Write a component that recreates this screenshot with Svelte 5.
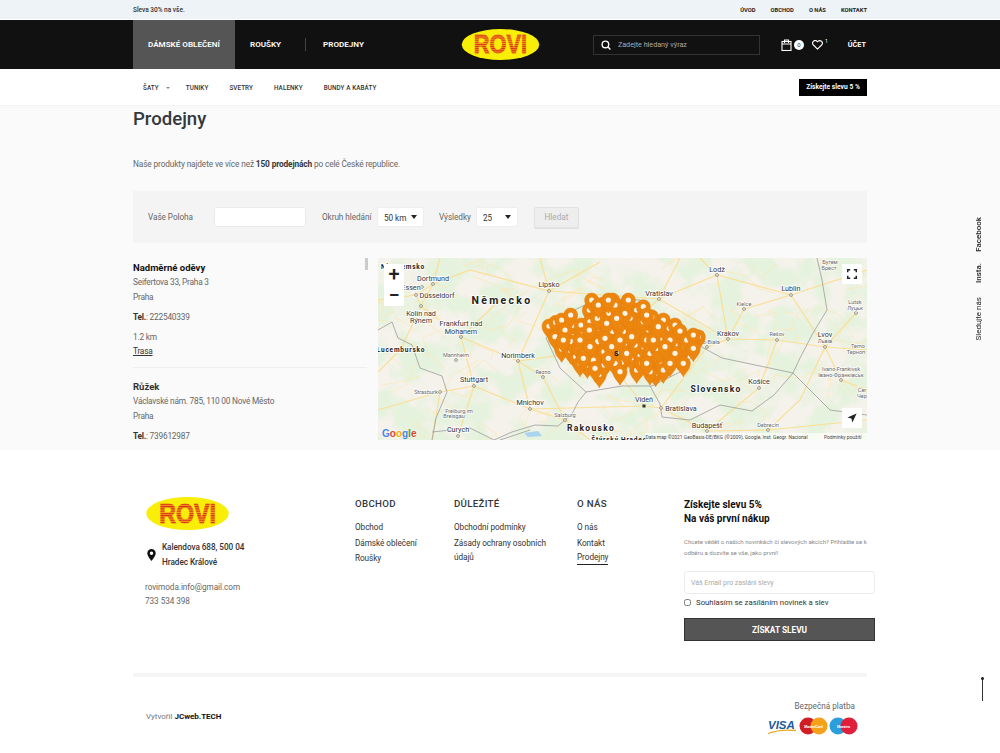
<script>
  const topLinks = ["ÚVOD", "OBCHOD", "O NÁS", "KONTAKT"];
  const subLinks = ["TUNIKY", "SVETRY", "HALENKY", "BUNDY A KABÁTY"];

  // pin heads, traced on the map (svg units are 3x, offset below)
  const rawPins = [
    [27,123],[47,112],[65,105],[92,90],[45,155],[100,150],[65,192],[97,155],[92,197],[107,215],
    [123,120],[148,75],[155,45],[190,58],[218,45],[240,88],[207,85],[255,60],[290,75],[310,65],
    [172,130],[215,140],[270,130],[305,145],[345,145],[370,105],[388,130],[405,120],[420,138],[475,155],
    [450,168],[360,165],[405,180],[435,185],[415,215],[380,208],[290,255],[347,265],[330,260],[245,232],
    [178,268],[142,240],[120,235],[192,240],[275,218],[300,210],[255,175],[205,165],[172,170],[143,165],
    [95,170],[115,185],[132,205],[155,205],[192,200],[230,200],[250,140],[290,145],[325,135],[285,105],
    [270,100],[150,110],[180,100],[310,185],[330,205],[355,225],[365,240],[305,235],[260,205],[225,235],
    [160,225],[340,120],[235,120],[320,165],[285,180],[350,190],[390,165],[440,165],[460,150],[405,205],
    [370,255],[200,115],[125,150],[255,85],[195,160],[148,135],[172,100],[300,115],[225,60],[310,110],
    [75,135],[70,165],[120,165],[150,185],[215,185],[240,165],[275,155],[340,165],[375,185],[230,100],
    [265,45],[175,60],[130,220],[205,220],[240,260],[165,250],[320,235],[390,235],[430,235],[460,190],
    [335,95],[355,125],[320,90],[205,45]
  ];
  const pins = rawPins.map(([x, y]) => [540 + x / 3, 285 + y / 3]);

  const labels = [
    ["Dortmund", 433, 281], ["Essen", 411, 290], ["Düsseldorf", 437, 298], ["Lipsko", 549, 287],
    ["Kolín nad", 421, 316], ["Rýnem", 421, 323], ["Frankfurt nad", 461, 326], ["Mohanem", 461, 334],
    ["Norimberk", 518, 358], ["Stuttgart", 474, 382], ["Mnichov", 530, 405], ["Curych", 458, 432],
    ["Lodž", 717, 272], ["Lublin", 791, 291], ["Vratislav", 659, 296], ["Krakov", 728, 336],
    ["Lvov", 825, 337], ["Košice", 759, 384], ["Vídeň", 644, 402], ["Bratislava", 681, 411],
    ["Budapešť", 707, 428], ["Katovice", 690, 335]
  ];
  const smallLabels = [
    ["Mannheim", 456, 357], ["Řezno", 543, 374], ["Štrasburk", 426, 394], ["Freiburg im", 459, 413],
    ["Breisgau", 454, 418], ["Salzburg", 565, 417], ["Kielce", 744, 306], ["Rešov", 777, 336],
    ["Львів", 825, 343], ["Бугем", 830, 264], ["Брест", 829, 270], ["Lutsk", 855, 304], ["Луцьк", 855, 310],
    ["Terno", 858, 348], ["Терноп", 856, 354], ["Ivano-Frankivsk", 841, 371], ["Івано-Франківськ", 841, 377],
    ["Bielsko-Biała", 704, 344], ["Debrecín", 768, 427], ["Čer", 862, 392], ["Чер", 862, 398]
  ];
  const boldLabels = [
    ["Nizozemsko", 403, 269, ""], ["Německo", 502, 304, "big"], ["Lucembursko", 401, 352, ""],
    ["Slovensko", 716, 392, "mid"], ["Rakousko", 591, 431, "mid"], ["Štýrský Hradec", 619, 442, ""]
  ];
  const dots = [
    [433,284],[422,287],[416,295],[549,291],[421,306],[461,337],[456,360],[518,361],[543,377],[474,386],
    [440,392],[530,409],[458,436],[565,420],[717,275],[791,295],[659,299],[744,309],[728,339],[777,340],
    [825,347],[856,313],[841,380],[707,347],[759,388],[661,408],[707,431],[768,430],[697,332]
  ];
  const roads = [
    "M378 300L416 295 433 284 470 270 549 291 600 262", "M433 284L421 306 461 337 474 386 530 409 644 406",
    "M416 295L421 306 401 349 378 372", "M461 337L518 361 549 291", "M518 361L530 409 565 420 590 440",
    "M474 386L440 392 432 440", "M458 436L474 386", "M549 291L659 299 717 275 791 295 825 347",
    "M659 299L728 339 777 340 825 347 867 350", "M717 275L728 339 707 347 661 408 707 431 768 430 867 420",
    "M518 361L600 350 644 406", "M600 350L659 299", "M644 406L661 408", "M707 431L759 388 777 340",
    "M791 295L867 270", "M825 347L841 380 867 390", "M433 284L440 258", "M549 291L540 258", "M717 275L700 258",
    "M500 300L461 337", "M543 377L518 361", "M543 377L565 420", "M378 410L440 392", "M825 347L800 400 768 430",
    "M659 299L680 258", "M856 313L825 347", "M744 309L728 339", "M744 309L791 295"
  ];
  const borders = [
    "M378 330L392 322 398 338 412 345 420 368 442 376 447 392 436 418 432 440",
    "M432 432L470 428 494 440", "M494 440L512 432 535 425 558 426 572 414 578 402 586 392 560 368 546 338",
    "M586 392L622 386 652 386 680 372 700 346", "M700 346L722 358 760 366 793 373",
    "M793 373L800 358 813 333 827 310 822 280 817 258", "M793 373L830 410 867 415",
    "M793 373L774 395 752 411 720 405 690 420 662 417 660 404 650 386",
    "M546 338L570 312 600 298 640 300 660 318 700 346", "M500 440L530 430"
  ];

  // thin side roads: a small fixed generator, so the map looks busy like the reference
  let seed = 17;
  function rnd() {
    seed = (seed * 16807) % 2147483647;
    return seed / 2147483647;
  }
  const minor = [];
  for (let i = 0; i < 90; i++) {
    let x = 378 + rnd() * 489;
    let y = 258 + rnd() * 182;
    let d = `M${x.toFixed(0)} ${y.toFixed(0)}`;
    for (let k = 0; k < 3; k++) {
      x += (rnd() - 0.5) * 50;
      y += (rnd() - 0.5) * 36;
      d += `L${x.toFixed(0)} ${y.toFixed(0)}`;
    }
    minor.push(d);
  }
</script>

{#snippet logo(w, h)}
  <svg class="logo" width={w} height={h} viewBox="0 0 80 32">
    <defs>
      <pattern id="stripes" width="3" height="2.2" patternUnits="userSpaceOnUse">
        <rect width="3" height="2.2" fill="#f59a1c" />
        <rect width="3" height="1.1" fill="#d83018" />
      </pattern>
    </defs>
    <ellipse cx="40" cy="16" rx="40" ry="16" fill="#f8ee08" />
    <text x="40" y="25.200" text-anchor="middle" font-family="Liberation Sans" font-weight="700" font-size="27" textLength="55" lengthAdjust="spacingAndGlyphs" fill="url(#stripes)" stroke="url(#stripes)" stroke-width="0.800">ROVI</text>
  </svg>
{/snippet}

<div class="page">
  <div class="topbar">
    <div class="wrap between">
      <span class="promo">Sleva 30% na vše.</span>
      <nav class="toplinks">
        {#each topLinks as link}<a href="#top">{link}</a>{/each}
      </nav>
    </div>
  </div>

  <header class="header">
    <div class="wrap headgrid">
      <nav class="mainnav">
        <a class="active" href="#top">DÁMSKÉ OBLEČENÍ</a>
        <a href="#top">ROUŠKY</a>
        <i class="sep"></i>
        <a href="#top">PRODEJNY</a>
      </nav>
      {@render logo(79, 31)}
      <div class="tools">
        <div class="search">
          <svg width="10" height="10" viewBox="0 0 10 10" fill="none" stroke="#fff" stroke-width="1.4"><circle cx="4.4" cy="4.4" r="3.3" /><path d="M7 7l2.4 2.4" /></svg>
          <span>Zadejte hledaný výraz</span>
        </div>
        <svg class="bag" width="11" height="12" viewBox="0 0 11 12" fill="none" stroke="#fff" stroke-width="1.1"><rect x="1" y="2.5" width="9" height="9" /><path d="M3.5 4V1h4v3M1 5h9" /></svg>
        <span class="badge">0</span>
        <svg class="heart" width="11" height="10" viewBox="0 0 24 22" fill="none" stroke="#fff" stroke-width="2.4"><path d="M12 20L3 11a5.6 5.6 0 0 1 8-8l1 1 1-1a5.6 5.6 0 0 1 8 8z" /></svg>
        <sup>1</sup>
        <a class="account" href="#top">ÚČET</a>
      </div>
    </div>
  </header>

  <div class="subnav">
    <div class="wrap between">
      <nav class="sublinks">
        <a class="first" href="#top">ŠATY <i></i></a>
        {#each subLinks as link}<a href="#top">{link}</a>{/each}
      </nav>
      <a class="promo-btn" href="#top">Získejte slevu 5 %</a>
    </div>
  </div>

  <main class="main">
    <div class="wrap">
      <h1>Prodejny</h1>
      <p class="lead">Naše produkty najdete ve více než <b>150 prodejnách</b> po celé České republice.</p>

      <form class="filter">
        <label class="l-pos" for="pos">Vaše Poloha</label>
        <input id="pos" class="field" />
        <label class="l-rad" for="rad">Okruh hledání</label>
        <div id="rad" class="sel s-rad">50 km<i></i></div>
        <label class="l-res" for="res">Výsledky</label>
        <div id="res" class="sel s-res">25<i></i></div>
        <button type="button" class="find">Hledat</button>
      </form>

      <section class="stores">
        <div class="list">
          <div class="store">
            <h3>Nadměrné oděvy</h3>
            <p>Seifertova 33, Praha 3</p>
            <p>Praha</p>
            <p class="tel"><b>Tel.</b>: 222540339</p>
            <p class="tel">1.2 km</p>
            <p><a href="#top">Trasa</a></p>
          </div>
          <div class="store">
            <h3>Růžek</h3>
            <p>Václavské nám. 785, 110 00 Nové Město</p>
            <p>Praha</p>
            <p class="tel"><b>Tel.</b>: 739612987</p>
          </div>
          <i class="thumb"></i>
        </div>

        <div class="map">
          <svg width="489" height="182" viewBox="378 258 489 182">
            <defs>
              <filter id="woods" x="0" y="0" width="100%" height="100%">
                <feTurbulence type="fractalNoise" baseFrequency="0.035" numOctaves="4" seed="8" />
                <feColorMatrix type="matrix" values="0 0 0 0 0.78  0 0 0 0 0.89  0 0 0 0 0.72  5 0 0 0 -2.05" />
              </filter>
            </defs>
            <rect x="378" y="258" width="489" height="182" fill="#f4f2ea" />
            <rect x="378" y="258" width="489" height="182" filter="url(#woods)" />
            {#each minor as d}<path {d} fill="none" stroke="#fae8b8" stroke-width="0.7" />{/each}
            {#each roads as d}<path {d} fill="none" stroke="#fbdf96" stroke-width="1.200" />{/each}
            {#each borders as d}<path {d} fill="none" stroke="#9c9c9c" stroke-width="0.8" />{/each}
            <path d="M524 433l14-2 4 5-14 1z" fill="#a9d3ee" />
            {#each dots as [x, y]}<circle cx={x} cy={y} r="1.4" fill="#fff" stroke="#6d6d5a" stroke-width="0.7" />{/each}
            <rect x="642.5" y="404.5" width="3" height="3" fill="#333" />
            <g class="t">
              {#each labels as [s, x, y]}<text {x} {y}>{s}</text>{/each}
            </g>
            <g class="ts">
              {#each smallLabels as [s, x, y]}<text {x} {y}>{s}</text>{/each}
            </g>
            <g class="tb">
              {#each boldLabels as [s, x, y, size]}<text {x} {y} class={size}>{s}</text>{/each}
            </g>
            {#each pins as [x, y]}
              <g transform="translate({x} {y})">
                <path d="M0 13.5C-1.6 9.6-7 6.4-7 0a7 7 0 0 1 14 0C7 6.4 1.6 9.6 0 13.5z" fill="#ec860e" stroke="#e07c0a" stroke-width="0.5" />
                <circle r="2.6" fill="#fdf3e4" />
              </g>
            {/each}
            <text class="letter" x="614" y="356">s</text>
            <text class="google" x="382" y="437"><tspan fill="#4a86e8">G</tspan><tspan fill="#e0453a">o</tspan><tspan fill="#f4b400">o</tspan><tspan fill="#4a86e8">g</tspan><tspan fill="#34a853">l</tspan><tspan fill="#e0453a">e</tspan></text>
            <rect x="645" y="433" width="222" height="7" fill="#fff" opacity="0.65" />
            <text class="attr" x="645.5" y="438.5">Data map ©2021 GeoBasis-DE/BKG (©2009), Google, Inst. Geogr. Nacional</text>
            <text class="attr" x="824" y="438.5">Podmínky použití</text>
          </svg>

          <div class="zoom"><span>+</span><span>−</span></div>
          <div class="ctl full">
            <svg width="10" height="10" viewBox="0 0 10 10" fill="none" stroke="#222" stroke-width="1.5"><path d="M0.7 3.2V0.7h2.5M6.8 0.7h2.5v2.5M9.3 6.8v2.5H6.8M3.2 9.3H0.7V6.8" /></svg>
          </div>
          <div class="ctl locate">
            <svg width="10" height="10" viewBox="0 0 10 10"><path d="M9.6 0.4L0.4 4.6l4 1 1 4z" fill="#222" /></svg>
          </div>
        </div>
      </section>
    </div>
  </main>

  <footer class="footer">
    <div class="footgrid">
      <div class="about">
        {@render logo(85, 33)}
        <div class="addr">
          <svg width="9" height="12" viewBox="0 0 9 12"><path fill-rule="evenodd" d="M4.5 0a4.2 4.2 0 0 1 4.2 4.2C8.700 7 4.500 12 4.500 12S.3 7 .3 4.200A4.200 4.200 0 0 1 4.500 0zm0 2.500a1.700 1.700 0 1 0 0 3.400 1.700 1.700 0 0 0 0-3.400z" fill="#111" /></svg>
          <span>Kalendova 688, 500 04<br />Hradec Králové</span>
        </div>
        <p class="contact">rovimoda.info@gmail.com<br />733 534 398</p>
      </div>
      <div class="col">
        <h4>OBCHOD</h4>
        <a href="#top">Obchod</a>
        <a href="#top">Dámské oblečení</a>
        <a href="#top">Roušky</a>
      </div>
      <div class="col">
        <h4>DŮLEŽITÉ</h4>
        <a href="#top">Obchodní podmínky</a>
        <a class="two" href="#top">Zásady ochrany osobních údajů</a>
      </div>
      <div class="col">
        <h4>O NÁS</h4>
        <a href="#top">O nás</a>
        <a href="#top">Kontakt</a>
        <a class="current" href="#top">Prodejny</a>
      </div>
      <div class="news">
        <h5>Získejte slevu 5%</h5>
        <h5>Na váš první nákup</h5>
        <p>Chcete vědět o našich novinkách či slevových akcích? Přihlašte se k odběru a dozvíte se vše, jako první!</p>
        <div class="email">Váš Email pro zaslání slevy</div>
        <label class="agree"><input type="checkbox" /> Souhlasím se zasíláním novinek a slev</label>
        <button type="button" class="get">ZÍSKAT SLEVU</button>
      </div>
    </div>

    <div class="wrap">
      <div class="rule"></div>
      <div class="bottom">
        <span class="made">Vytvořil <b>JCweb.TECH</b></span>
        <div class="pay">
          <span>Bezpečná platba</span>
          <svg width="92" height="20" viewBox="0 0 92 20">
            <text x="1" y="13" class="visa">VISA</text>
            <path d="M1 17.500C10 14 20 13.500 29 14.500" fill="none" stroke="#e9a826" stroke-width="1.300" />
            <circle cx="41" cy="10" r="8.500" fill="#cf1f25" />
            <circle cx="52" cy="10" r="8.500" fill="#f5a11c" />
            <text x="46.500" y="11.500" class="cardtxt">MasterCard</text>
            <circle cx="71" cy="10" r="8.500" fill="#2a9fdc" />
            <circle cx="82" cy="10" r="8.500" fill="#e0203a" />
            <text x="76.500" y="11.500" class="cardtxt">Maestro</text>
          </svg>
        </div>
      </div>
    </div>
  </footer>

  <div class="social">
    <a href="#top">Facebook</a>
    <a href="#top">Insta.</a>
    <a class="follow" href="#top">Sledujte nás</a>
  </div>
  <div class="totop"></div>
</div>

<style>
  :global(body) {
    margin: 0;
    background: #fff;
  }
  .page {
    position: relative;
    height: 753px;
    overflow: hidden;
    font-family: Roboto, "Liberation Sans", sans-serif;
    color: #666;
  }
  a {
    color: inherit;
    text-decoration: none;
  }
  .wrap {
    width: 734px;
    margin: 0 auto;
  }
  .between {
    display: flex;
    justify-content: space-between;
    align-items: center;
  }

  .topbar {
    height: 19px;
    background: #eef3f7;
    border-bottom: 1px solid #fff;
  }
  .topbar .wrap {
    height: 19px;
  }
  .promo {
    font-size: 6.5px;
    font-weight: 500;
    color: #333;
  }
  .toplinks {
    display: flex;
    gap: 15px;
    font-size: 5.800px;
    font-weight: 700;
    color: #222;
  }

  .header {
    height: 49px;
    background: #111;
    color: #fff;
  }
  .headgrid {
    height: 49px;
    display: grid;
    grid-template-columns: 1fr auto 1fr;
    align-items: center;
  }
  .mainnav {
    display: flex;
    align-items: center;
    height: 49px;
    font-size: 8.100px;
    font-weight: 600;
  }
  .mainnav a {
    padding: 0 15px;
    line-height: 49px;
    white-space: nowrap;
  }
  .mainnav .active {
    background: #555;
    width: 72px;
  }
  .sep {
    width: 1px;
    height: 13px;
    background: #444;
    margin: 0 2px 0 9px;
  }
  .logo {
    display: block;
  }
  .tools {
    display: flex;
    align-items: center;
    justify-content: flex-end;
  }
  .search {
    height: 18px;
    border: 1px solid #333;
    display: flex;
    align-items: center;
    gap: 7px;
    padding-left: 7px;
    width: 158px;
    font-size: 7.200px;
    color: #aaa;
    margin-right: 21px;
  }
  .badge {
    width: 10px;
    height: 10px;
    border-radius: 50%;
    background: #fff;
    color: #333;
    font-size: 6px;
    text-align: center;
    line-height: 10px;
    margin: 0 8px 0 2px;
  }
  sup {
    font-size: 5px;
    margin: 0 20px 6px 2px;
    line-height: 1;
  }
  .account {
    font-size: 7.300px;
    font-weight: 700;
    margin-right: 1px;
  }

  .subnav {
    height: 36px;
    background: #fff;
  }
  .subnav .wrap {
    height: 36px;
    padding-top: 1px;
    box-sizing: border-box;
  }
  .sublinks {
    display: flex;
    gap: 21px;
    padding-left: 10px;
    font-size: 6.300px;
    font-weight: 500;
    color: #333;
    letter-spacing: 0.1px;
  }
  .sublinks .first {
    display: flex;
    align-items: center;
    gap: 7px;
    margin-right: -5px;
  }
  .first i {
    width: 0;
    height: 0;
    border: 2px solid transparent;
    border-top: 2px solid #888;
    margin-top: 2px;
  }
  .promo-btn {
    width: 68px;
    height: 17px;
    background: #000;
    color: #fff;
    font-size: 6.700px;
    font-weight: 700;
    text-align: center;
    line-height: 17px;
  }

  .main {
    height: 345px;
    background: #fafafa;
    box-shadow: inset 0 1px 1px #f2f2f2;
  }
  h1 {
    margin: 0;
    padding-top: 2px;
    font-size: 18.600px;
    line-height: 24px;
    font-weight: 500;
    color: #33383d;
  }
  .lead {
    margin: 0;
    padding-top: 27px;
    font-size: 8.300px;
    line-height: 12px;
    letter-spacing: -0.13px;
  }
  .lead b {
    color: #33383d;
    font-weight: 700;
  }

  .filter {
    margin-top: 21px;
    height: 52px;
    background: #f4f4f4;
    display: flex;
    align-items: center;
    font-size: 8.200px;
    letter-spacing: -0.05px;
    padding-left: 15px;
    box-sizing: border-box;
  }
  .l-pos {
    width: 66px;
  }
  .field {
    width: 92px;
    height: 20px;
    box-sizing: border-box;
    border: 1px solid #ececec;
    border-radius: 2px;
    background: #fff;
    padding: 0;
    margin-right: 16px;
  }
  .l-rad {
    width: 55px;
  }
  .sel {
    position: relative;
    height: 20px;
    line-height: 20px;
    box-sizing: border-box;
    background: #fff;
    border: 1px solid #eee;
    border-radius: 2px;
    padding-left: 6px;
    color: #333;
  }
  .sel i {
    position: absolute;
    right: 6px;
    top: 7px;
    border: 3px solid transparent;
    border-top: 4px solid #222;
  }
  .s-rad {
    width: 47px;
    margin-right: 15px;
  }
  .l-res {
    width: 37px;
  }
  .s-res {
    width: 42px;
    margin-right: 16px;
  }
  .find {
    width: 45px;
    height: 21px;
    background: #eee;
    border: 1px solid #e2e2e2;
    border-radius: 2px;
    box-shadow: 0 1px 1px #ddd;
    font: inherit;
    color: #aaa;
    padding: 0;
  }

  .stores {
    margin-top: 15px;
    display: flex;
    height: 182px;
    gap: 10px;
  }
  .list {
    position: relative;
    width: 235px;
    overflow: hidden;
    font-size: 8.300px;
    letter-spacing: -0.22px;
    line-height: 14.500px;
  }
  .thumb {
    position: absolute;
    right: -1px;
    top: 0;
    width: 4px;
    height: 12px;
    background: #ccc;
  }
  .store {
    height: 106px;
    border-bottom: 1px solid #eee;
    margin-right: 1px;
    margin-bottom: 12px;
  }
  .store:last-of-type {
    border: 0;
  }
  .store h3 {
    margin: 3px 0 0;
    font-size: 9.500px;
    line-height: 14px;
    font-weight: 700;
    color: #111;
    letter-spacing: 0;
  }
  .store:nth-of-type(2) h3 {
    color: #333;
  }
  .store p {
    margin: 0;
  }
  .store .tel {
    margin-top: 5.500px;
  }
  .store b {
    color: #333;
    font-weight: 700;
  }
  .store a {
    color: #333;
    text-decoration: underline;
  }

  .map {
    position: relative;
    width: 489px;
    height: 182px;
    overflow: hidden;
  }
  .map > svg {
    display: block;
  }
  .t text {
    font-size: 7.200px;
    fill: #333;
    text-anchor: middle;
    paint-order: stroke;
    stroke: #fff;
    stroke-width: 1.500px;
  }
  .ts text {
    font-size: 5.500px;
    fill: #666;
    text-anchor: middle;
    paint-order: stroke;
    stroke: #fff;
    stroke-width: 1.200px;
  }
  .tb text {
    font-size: 6.500px;
    font-weight: 700;
    fill: #222;
    text-anchor: middle;
    letter-spacing: 0.8px;
    paint-order: stroke;
    stroke: #fff;
    stroke-width: 1.500px;
  }
  .tb text.big {
    font-size: 10.500px;
    letter-spacing: 2.300px;
  }
  .tb text.mid {
    font-size: 8.500px;
    letter-spacing: 1.300px;
  }
  .letter {
    font-size: 9px;
    font-weight: 700;
    fill: #222;
  }
  .google {
    font-family: "Liberation Sans", sans-serif;
    font-size: 10px;
    font-weight: 700;
  }
  .attr {
    font-size: 4.900px;
    fill: #444;
  }
  .zoom {
    position: absolute;
    left: 6px;
    top: 6px;
    width: 20px;
    height: 42px;
    background: #fff;
    display: flex;
    flex-direction: column;
    color: #222;
  }
  .zoom span {
    height: 21px;
    text-align: center;
    font-size: 20px;
    line-height: 20px;
    font-weight: 500;
  }
  .ctl {
    position: absolute;
    right: 5px;
    width: 20px;
    height: 20px;
    background: #fff;
    display: flex;
    align-items: center;
    justify-content: center;
  }
  .full {
    top: 6px;
  }
  .locate {
    top: 150px;
  }

  .footer {
    background: #fff;
  }
  .footgrid {
    display: grid;
    grid-template-columns: 210px 99px 123px 107px 191px;
    margin-left: 145px;
    height: 223px;
    font-size: 8.200px;
    letter-spacing: -0.05px;
  }
  .about {
    padding-top: 47px;
  }
  .addr {
    display: flex;
    align-items: center;
    gap: 6px;
    margin-top: 10px;
    margin-left: 2px;
    color: #333;
    font-weight: 500;
    line-height: 14.500px;
  }
  .contact {
    margin: 11px 0 0;
    line-height: 14px;
  }
  .col {
    padding-top: 47px;
    display: flex;
    flex-direction: column;
    align-items: flex-start;
    color: #333;
    line-height: 14px;
  }
  .col h4 {
    margin: 0 0 9px;
    font-size: 9.700px;
    line-height: 14px;
    font-weight: 500;
    color: #33383d;
    letter-spacing: 0.3px;
  }
  .col a {
    margin-bottom: 1.500px;
  }
  .col .two {
    width: 100px;
  }
  .col .current {
    border-bottom: 1.500px solid #222;
    line-height: 13px;
  }
  .news {
    padding-top: 48px;
  }
  .news h5 {
    margin: 0;
    font-size: 10px;
    line-height: 14px;
    font-weight: 700;
    color: #111;
    letter-spacing: 0;
  }
  .news p {
    margin: 10px 0 0;
    font-size: 6.100px;
    line-height: 11px;
    color: #888;
    letter-spacing: 0;
  }
  .email {
    margin-top: 13px;
    height: 23px;
    line-height: 23px;
    box-sizing: border-box;
    border: 1px solid #ececec;
    border-radius: 3px;
    padding-left: 6px;
    font-size: 7px;
    color: #aaa;
  }
  .agree {
    display: flex;
    align-items: center;
    gap: 5px;
    margin-top: 2px;
    height: 13px;
    color: #333;
    font-size: 7.800px;
    letter-spacing: 0;
    white-space: nowrap;
  }
  .agree input {
    margin: 0;
    width: 7px;
    height: 7px;
  }
  .get {
    display: block;
    margin-top: 9px;
    width: 191px;
    height: 23px;
    padding: 0;
    background: #555;
    border: 1px solid #333;
    color: #fff;
    font: inherit;
    font-weight: 700;
    font-size: 8.300px;
  }

  .rule {
    height: 4px;
    background: #f5f5f5;
  }
  .bottom {
    display: flex;
    justify-content: space-between;
    align-items: flex-start;
    padding: 24px 8px 0 13px;
  }
  .made {
    margin-top: 11px;
    font-size: 8px;
    color: #777;
  }
  .made b {
    color: #111;
  }
  .pay {
    display: flex;
    flex-direction: column;
    align-items: flex-end;
    font-size: 8.200px;
    gap: 5px;
  }
  .pay span {
    margin-right: 4px;
  }
  .pay svg {
    display: block;
  }
  .visa {
    font-family: "Liberation Sans", sans-serif;
    font-size: 11.500px;
    font-weight: 700;
    font-style: italic;
    fill: #1a5b9c;
  }
  .cardtxt {
    font-size: 3.500px;
    font-weight: 700;
    fill: #fff;
    text-anchor: middle;
  }

  .social {
    position: absolute;
    left: 974px;
    top: 217px;
    display: flex;
    flex-direction: column;
    gap: 11px;
    font-size: 8px;
    font-weight: 500;
    line-height: 9px;
    color: #222;
  }
  .social .follow {
    margin-top: 3px;
    font-weight: 400;
  }
  .social a {
    writing-mode: vertical-rl;
    transform: rotate(180deg);
  }
  .totop {
    position: absolute;
    left: 982px;
    top: 677px;
    width: 1px;
    height: 24px;
    background: #333;
  }
  .totop::before {
    content: "";
    position: absolute;
    left: -1px;
    top: 0;
    width: 3px;
    height: 3px;
    border-radius: 50%;
    background: #222;
  }
</style>
